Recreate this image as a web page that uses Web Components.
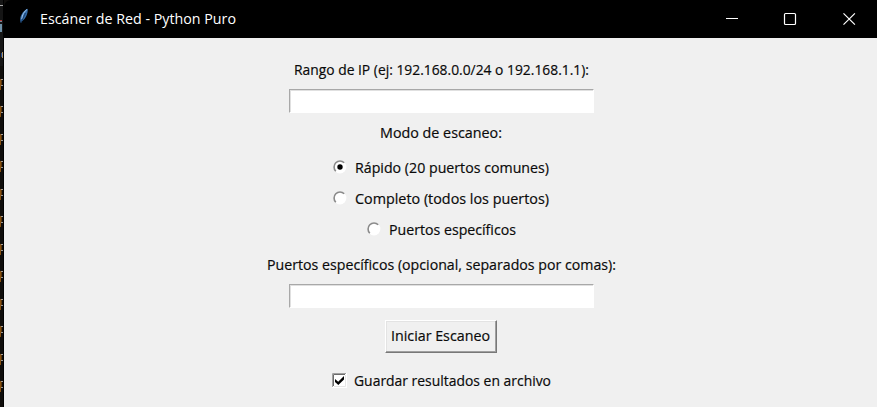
<!DOCTYPE html>
<html lang="es"><head><meta charset="utf-8"><title>Escáner de Red - Python Puro</title>
<style>html,body{margin:0;height:100%;overflow:hidden;background:#0f0d0b}</style></head><body>
<scanner-desktop></scanner-desktop>
<script>
const define=(name,html,after)=>customElements.define(name,class extends HTMLElement{
  connectedCallback(){
    if(this.shadowRoot)return;
    const t=document.createElement('template');t.innerHTML=html;
    this.attachShadow({mode:'open'}).append(t.content.cloneNode(true));
    if(after)after(this,this.shadowRoot);
  }});

// A single line of text condensed to the width given in its attribute.
define('fit-text',`<style>:host{display:block;flex:none;height:20px;line-height:var(--line,20px);white-space:nowrap}
span{display:inline-block;transform-origin:0 50%}</style><span><slot></slot></span>`,(el,r)=>{
  const w=+el.getAttribute('width'),s=r.querySelector('span');
  el.style.width=w+'px';
  s.style.transform='scaleX('+w/s.getBoundingClientRect().width+')';
});

// Slice of the editor visible at the left of the window.
define('editor-edge',`<style>:host{display:block;width:4px;height:407px;flex:none;background:#0f0d0b}svg{display:block}</style>
<svg width="4" height="407" shape-rendering="crispEdges">
<rect width="3" height="66" fill="#151515"/><rect y="5" width="3" height="1" fill="#aaa"/><rect y="20" width="2" height="1" fill="#a33"/><rect y="21" width="2" height="1" fill="#789"/>
<rect y="24" width="2" height="8" fill="#6f91a8"/><path d="M2 52h1v6h-1z" fill="#a98f62"/><path d="M1 53h1v4h-1z" fill="#244b91"/>
<g id="m"></g><rect x="3" width="1" height="407" fill="#000"/></svg>`,(el,r)=>{
  let s='';for(let i=0;i<12;i++){const y=Math.round(79+i*27.45);
  s+=`<rect y="${y}" width="1" height="11" fill="#87500f"/><rect x="1" y="${y+1}" width="1" height="6" fill="#593409"/><rect x="1" y="${y}" width="2" height="1" fill="#a7a09a"/><rect x="1" y="${y+6}" width="2" height="1" fill="#9c9792"/>`}
  r.querySelector('#m').innerHTML=s;
});

define('title-bar',`<style>:host{display:flex;height:38px;background:#000;color:#fff;font:15px/20px "Open Sans","Noto Sans",sans-serif;border-top-left-radius:7px}
.feather{margin:8px 0 0 14px;width:12px;height:16px}.t{margin:8px 0 0 10px}.c{margin-left:auto;display:flex}.c svg{width:58.500px;height:38px}svg{display:block;flex:none}</style>
<svg class="feather" viewBox="0 0 12 16"><path d="M9.800 .8C6 2 2.300 7 2.200 11.500L2.600 14.700L4.200 13C7.500 11 10 6 9.800 .8Z" fill="#326baa"/><path d="M9 1.500C6.500 3 4 7 3.800 11" stroke="#a4c9ed" fill="none"/><path d="M7.500 5L4 12.500L3 15" stroke="#17365b" fill="none" stroke-width=".8"/></svg>
<fit-text class="t" width="196">Escáner de Red - Python Puro</fit-text>
<div class="c">
<svg viewBox="0 0 58.500 38"><path d="M24 18.500h12" stroke="#fff"/></svg>
<svg viewBox="0 0 58.500 38"><rect x="24.500" y="13.500" width="11" height="11" rx="1" fill="none" stroke="#fff" stroke-width="1.200"/></svg>
<svg viewBox="0 0 58.500 38"><path d="M24.500 13.300l11.400 11.400M35.900 13.300l-11.400 11.400" stroke="#fff" stroke-width="1.200"/></svg></div>`);

define('entry-field',`<style>:host{display:block;box-sizing:border-box;width:305px;height:24px;background:#fff;border:1px solid #fff;border-top-color:#a8a8a8;border-left-color:#a8a8a8;box-shadow:inset 1px 1px #e0e0e0}</style>`);

define('radio-choice',`<style>:host{display:flex;height:20px}svg{flex:none;width:14px;height:14px;margin:2px 8px 0 0}#dot{display:none}:host([checked]) #dot{display:block}</style>
<svg viewBox="0 0 14 14"><circle cx="7" cy="7" r="6.400" fill="#fff"/><path d="M2.800 11.200A5.900 5.900 0 0 1 11.200 2.800" fill="none" stroke="#8a8a8a" stroke-width="1.600"/><circle id="dot" cx="7" cy="7" r="2.700" fill="#000"/></svg><slot></slot>`);

define('check-choice',`<style>:host{display:flex;height:20px}svg{flex:none;width:15px;height:15px;margin:2px 7px 0 1px}</style>
<svg viewBox="0 0 15 15"><path d="M0 0h15v15H0z" fill="#fff"/><path d="M.5 14V.5H14" fill="none" stroke="#a0a0a0"/><path d="M1.500 13V1.500H13" fill="none" stroke="#6b6b6b"/><path d="M2 13.500h11.500V2" fill="none" stroke="#e6e6e6"/><path d="M3 6l3.200 2.700L12 3v3.500L6.300 12L3 9z" fill="#000"/></svg><slot></slot>`);

define('push-button',`<style>:host{display:block;box-sizing:border-box;width:112px;height:33px;padding:5px 0 0 5px;border:1px solid #fff;border-right-color:#787878;border-bottom-color:#787878;box-shadow:inset -1px -1px #a0a0a0,inset 1px 1px #e3e3e3}</style><slot></slot>`);

define('scan-form',`<style>:host{--line:18px;display:flex;flex-direction:column;align-items:center;box-sizing:border-box;height:369px;padding:22px 0 0 1px;background:#f0f0f0;color:#0a0a0a;-webkit-text-stroke:.2px #0a0a0a;font:15.300px/20px "Open Sans","Noto Sans",sans-serif}
.e1{margin:9px 0 10px}.m{margin-bottom:15px}.r{margin-bottom:11px}.r3{margin-bottom:15px}.e2{margin:9px 0 12px}push-button{margin-bottom:18px}</style>
<fit-text width="295">Rango de IP (ej: 192.168.0.0/24 o 192.168.1.1):</fit-text>
<entry-field class="e1"></entry-field>
<fit-text class="m" width="122">Modo de escaneo:</fit-text>
<radio-choice class="r" checked><fit-text width="194">Rápido (20 puertos comunes)</fit-text></radio-choice>
<radio-choice class="r"><fit-text width="194">Completo (todos los puertos)</fit-text></radio-choice>
<radio-choice class="r3"><fit-text width="127">Puertos específicos</fit-text></radio-choice>
<fit-text width="349">Puertos específicos (opcional, separados por comas):</fit-text>
<entry-field class="e2"></entry-field>
<push-button><fit-text width="99">Iniciar Escaneo</fit-text></push-button>
<check-choice><fit-text width="197">Guardar resultados en archivo</fit-text></check-choice>`);

define('scanner-desktop',`<style>:host{display:flex;width:877px;height:407px}main{flex:1}</style><editor-edge></editor-edge><main><title-bar></title-bar><scan-form></scan-form></main>`);
</script></body></html>
